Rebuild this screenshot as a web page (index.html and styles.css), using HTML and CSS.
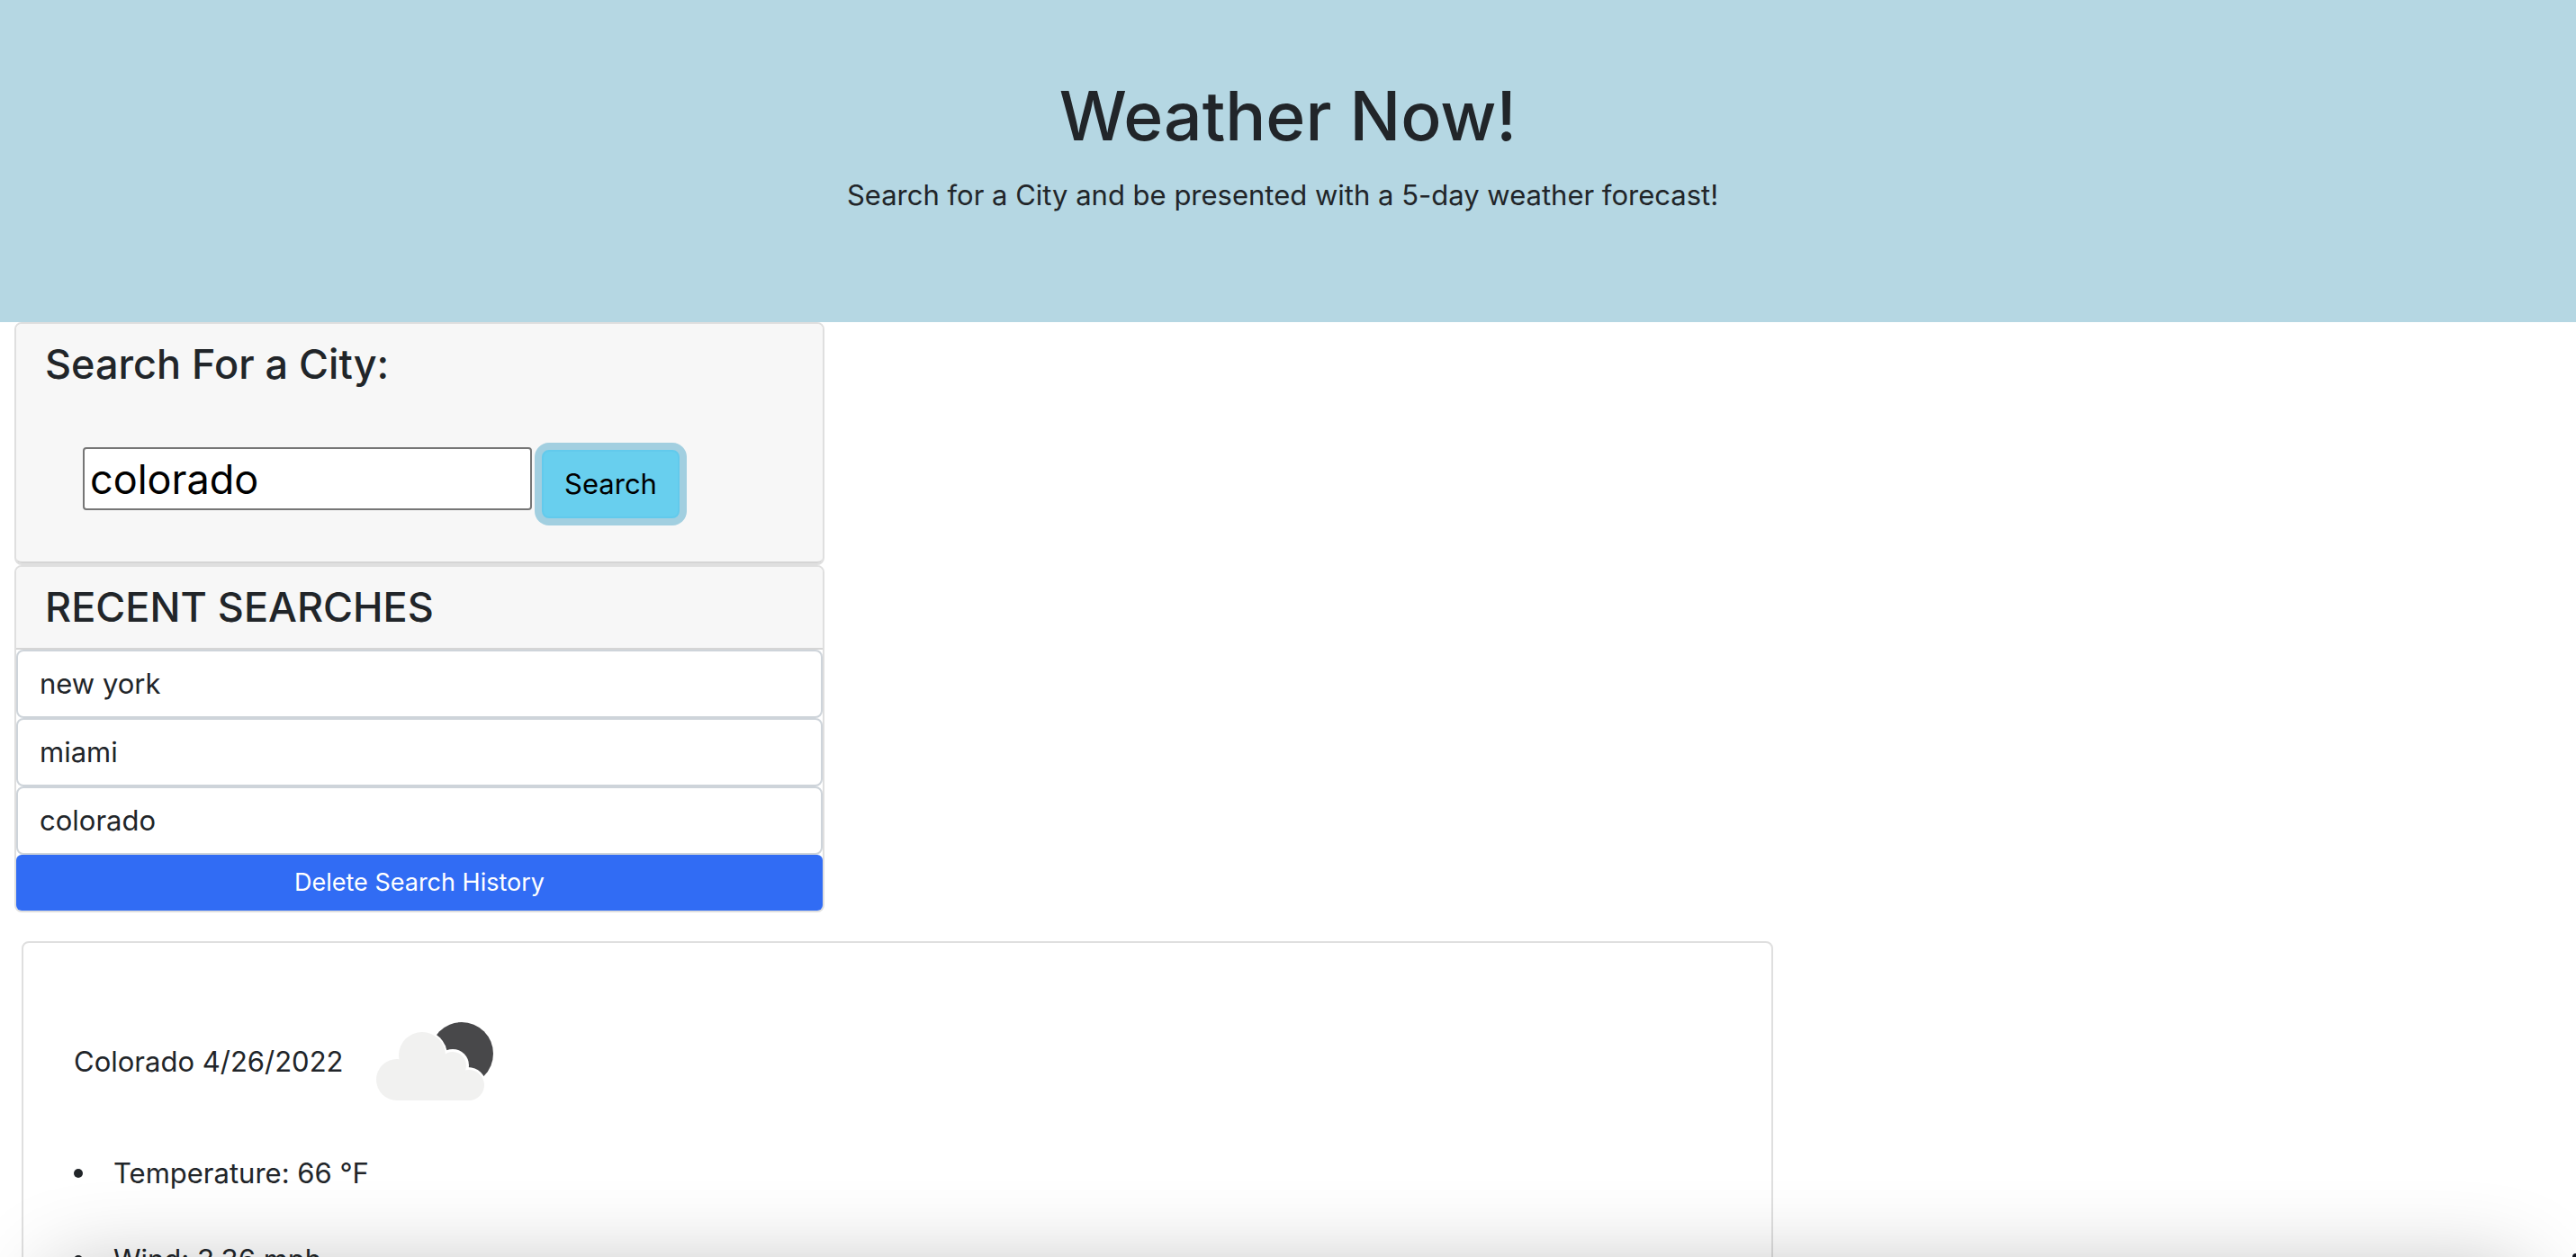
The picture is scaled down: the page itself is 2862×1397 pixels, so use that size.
FILE: index.html
```html
<!DOCTYPE html>
<html lang="en">
<head>
  <meta charset="utf-8">
  <meta name="viewport" content="width=device-width, initial-scale=1">
  <title>Weather Now!</title>
  <link rel="stylesheet" href="styles.css">
</head>
<body>
  <header class="hero">
    <h1 class="hero-title">Weather Now!</h1>
    <p class="hero-text">Search for a City and be presented with a 5-day weather forecast!</p>
  </header>

  <main>
    <aside class="sidebar">
      <section class="card">
        <div class="card-header search-header">
          <h2 class="card-title"><label for="city">Search For a City:</label></h2>
          <form class="search-form">
            <input class="search-input" id="city" type="text" value="colorado">
            <button class="btn-search" type="button">Search</button>
          </form>
        </div>
      </section>
      <section class="card">
        <div class="card-header">
          <h2 class="card-title">RECENT SEARCHES</h2>
        </div>
        <ul class="history">
          <li class="history-item">new york</li>
          <li class="history-item">miami</li>
          <li class="history-item">colorado</li>
        </ul>
        <button class="btn-delete" type="button">Delete Search History</button>
      </section>
    </aside>

    <section class="card forecast">
      <div class="forecast-head">
        <span>Colorado 4/26/2022</span>
        <svg class="weather-icon" viewBox="0 0 200 200" role="img" aria-label="Few clouds">
          <circle cx="130" cy="91" r="35" fill="#48484a"/>
          <g fill="#fff">
            <circle cx="86" cy="93" r="28"/>
            <circle cx="120" cy="104" r="18"/>
            <circle cx="137" cy="126" r="20"/>
          </g>
          <g fill="#f1f1f0">
            <circle cx="58" cy="120" r="23"/>
            <circle cx="86" cy="93" r="26"/>
            <circle cx="120" cy="104" r="15"/>
            <circle cx="138" cy="126" r="17"/>
            <path d="M58 98h50l25 12 5 33H58z"/>
          </g>
        </svg>
      </div>
      <ul class="conditions">
        <li class="condition">Temperature: 66 °F</li>
        <li class="condition">Wind: 3.36 mph</li>
      </ul>
    </section>
  </main>
  <div class="bottom-shadow"></div>
</body>
</html>
```
FILE: styles.css
```css
* { box-sizing: border-box; }

body {
  height: 100vh;
  margin: 0;
  overflow: hidden;
  background: #fff;
  color: #212529;
  font-family: Inter, "Liberation Sans", sans-serif;
  font-size: 31px;
  line-height: 48px;
}

h1, h2, p, ul { margin: 0; padding: 0; }
h1, h2 { font-weight: 500; }

.hero {
  padding: 81px 0 117px;
  background: #b5d7e3;
  text-align: center;
}

.hero-title {
  margin-bottom: 16px;
  font-size: 75px;
  line-height: 96px;
}

.hero-text { padding-right: 12px; }

.sidebar {
  max-width: 900px;
  margin-left: 16px;
}

.card {
  border: 2px solid #dfdfdf;
  border-radius: 8px;
  background: #fff;
}

.card-header {
  padding: 16px 32px;
  border-bottom: 2px solid #d5d5d5;
  border-radius: 6px 6px 0 0;
  background: #f7f7f7;
}

.search-header { border-radius: 6px; }

.card-title {
  font-size: 45px;
  line-height: 58px;
}

.search-form {
  display: flex;
  align-items: baseline;
  gap: 11px;
  padding: 63px 42px 32px;
}

.search-input {
  width: 499px;
  height: 70px;
  padding: 2px 6px;
  border: 2px solid #767676;
  border-radius: 4px;
  background: #fff;
  color: #000;
  font: inherit;
  font-size: 45px;
}

.btn-search {
  width: 153px;
  height: 76px;
  padding: 0;
  border: 2px solid #62caec;
  border-radius: 8px;
  background: #68cfee;
  box-shadow: 0 0 0 8px #a2cfe0;
  color: #000;
  font: inherit;
}

.history { list-style: none; }

.history-item {
  padding: 12px 24px;
  border: 2px solid #ced4da;
  border-radius: 8px;
}

.btn-delete {
  display: block;
  width: 100%;
  height: 62px;
  padding: 0;
  border: 0;
  border-radius: 6px;
  background: #316cf4;
  color: #fff;
  font: inherit;
  font-size: 27px;
}

.forecast {
  width: 68%;
  margin: 32px 0 0 24px;
  padding: 32px 56px;
}

.forecast-head {
  display: flex;
  align-items: center;
  gap: 2px;
}

.weather-icon {
  width: 200px;
  height: 200px;
}

.conditions {
  display: grid;
  gap: 48px;
  list-style: none;
}

.condition {
  display: flex;
  align-items: center;
  gap: 34px;
}

.condition::before {
  width: 10px;
  height: 10px;
  border-radius: 50%;
  background: #212529;
  content: "";
}

.bottom-shadow {
  position: fixed;
  right: 60px;
  bottom: -100px;
  left: 60px;
  height: 100px;
  box-shadow: 0 20px 100px rgba(0, 0, 0, 0.3);
  pointer-events: none;
}

.bottom-shadow::after {
  position: fixed;
  right: 0;
  bottom: 0;
  width: 4px;
  height: 4px;
  border-radius: 4px 0 0 0;
  background: #10131f;
  content: "";
}
```
